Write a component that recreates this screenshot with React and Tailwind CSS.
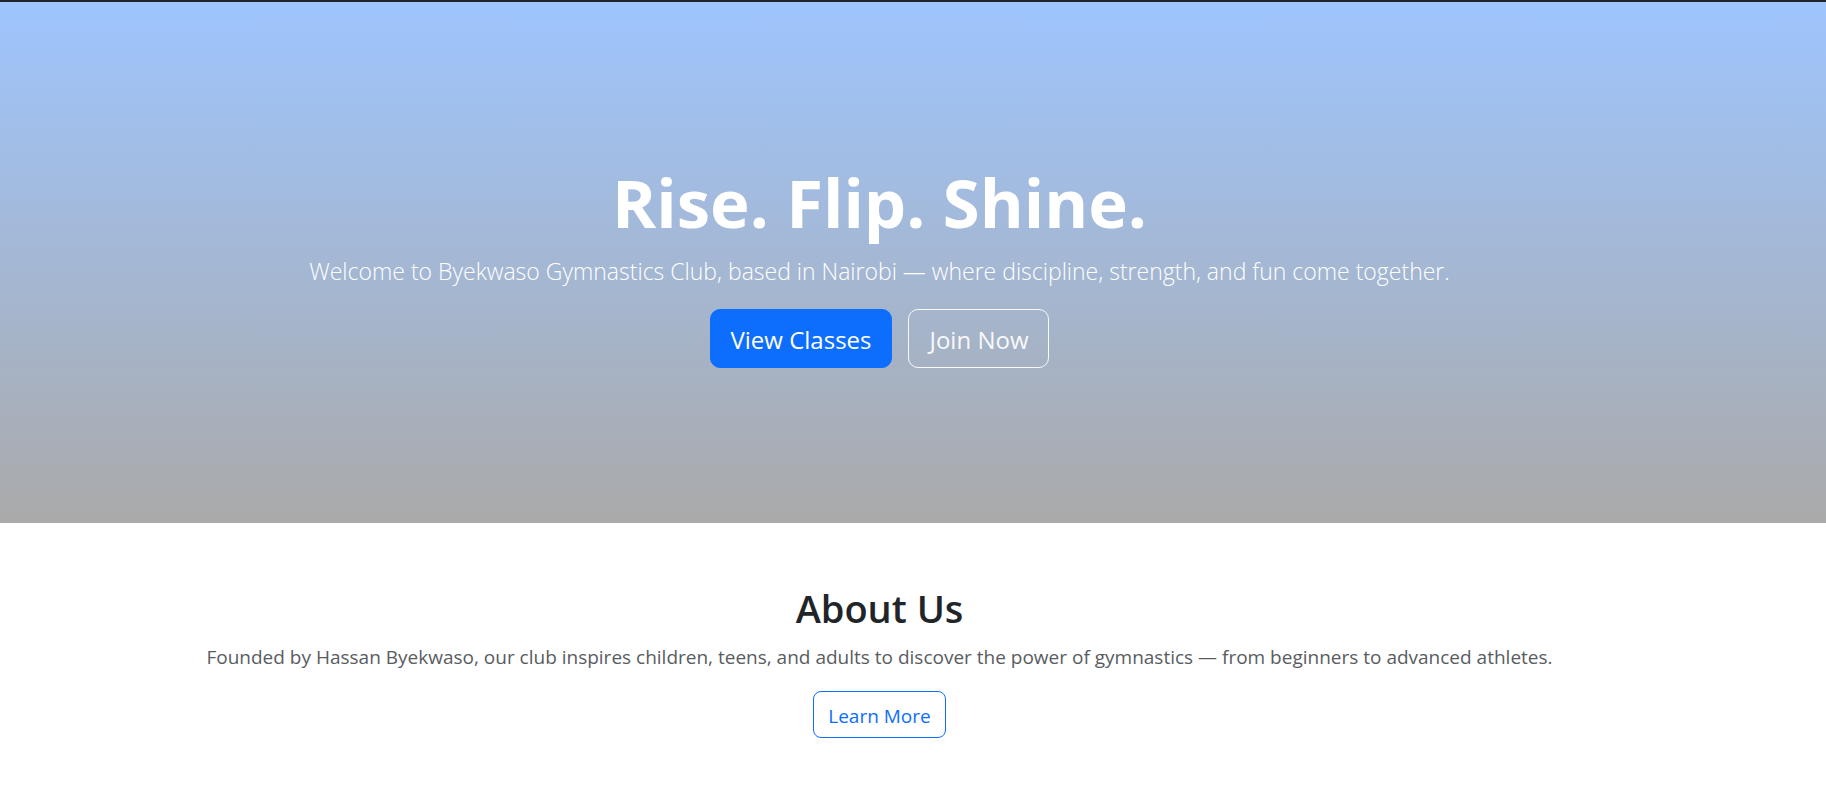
export default function App() {
  return (
    <div className="min-h-screen border-t-2 border-[#212529] bg-white font-['Open_Sans','Noto_Sans',sans-serif] text-[#212529]">
      <header className="flex min-h-[521px] flex-col items-center justify-center bg-linear-to-b/srgb from-[#9ec5fe] to-[#aaaaaa] pr-[67px] text-center">
        <h1 className="mb-1 text-[67px] leading-[90px] font-bold text-white">Rise. Flip. Shine.</h1>
        <p className="mb-[18px] text-[23px] leading-[40px] font-light text-white">
          Welcome to Byekwaso Gymnastics Club, based in Nairobi — where discipline, strength, and fun come together.
        </p>
        <div className="flex gap-4">
          <a href="#classes" className="rounded-[10px] border border-[#0d6efd] bg-[#0d6efd] px-5 pt-[11px] pb-[9px] text-[24px] leading-[37px] text-white">View Classes</a>
          <a href="#join" className="rounded-[10px] border border-[#f8f9fa] px-5 pt-[11px] pb-[9px] text-[24px] leading-[37px] text-[#f8f9fa]">Join Now</a>
        </div>
      </header>
      <section className="flex flex-col items-center py-[60px] pr-[67px] text-center">
        <h2 className="mb-2 text-[38px] leading-[50px] font-semibold">About Us</h2>
        <p className="mb-[18px] text-[19px] leading-[32px] text-[#595c5f]">
          Founded by Hassan Byekwaso, our club inspires children, teens, and adults to discover the power of gymnastics — from beginners to advanced athletes.
        </p>
        <a href="#about" className="rounded-lg border border-[#0d6efd] px-[14px] pt-[9px] pb-[6px] text-[19px] leading-[30px] text-[#0d6efd]">Learn More</a>
      </section>
    </div>
  );
}
